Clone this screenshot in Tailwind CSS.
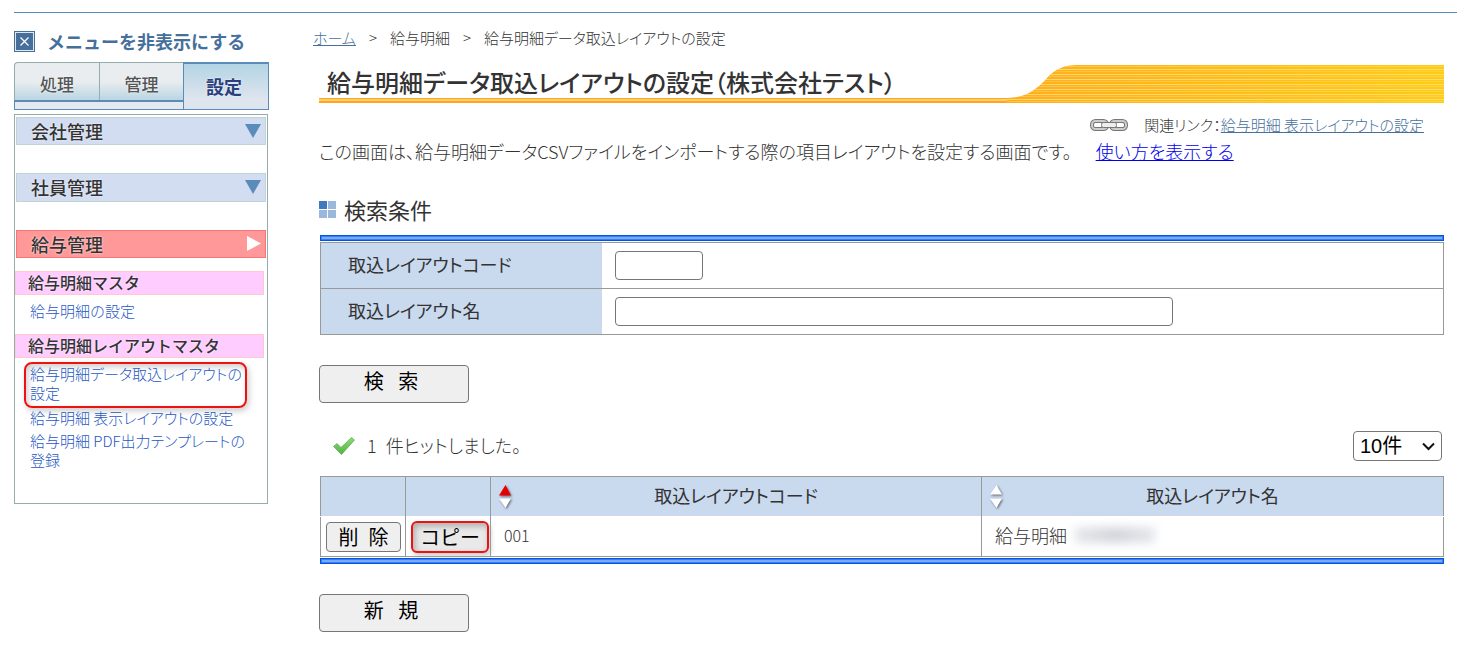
<!DOCTYPE html>
<html lang="ja">
<head>
    <meta charset="UTF-8">
    <title>給与明細データ取込レイアウトの設定</title>
    <script src="https://cdn.jsdelivr.net/npm/@tailwindcss/browser@4"></script>
</head>
<body class="bg-white text-[#333] font-light font-['Noto_Sans_CJK_JP',sans-serif] [font-feature-settings:'palt']">
    <div class="ml-[14px] mr-2 mt-3 border-t border-[#5b8bb9] flex">
        <!-- サイドメニュー -->
        <aside class="w-[255px] shrink-0 pt-[18px] [font-feature-settings:normal]">
            <button class="flex items-center gap-3 h-5 text-[18px] leading-5 font-bold text-[#466f9b]">
                <svg class="w-[21px] h-[21px]" viewBox="0 0 21 21" fill="none">
                    <rect x="0.500" y="0.500" width="20" height="20" fill="#dfe7ef" stroke="#466f9b"/>
                    <rect x="2" y="2" width="17" height="17" fill="#466f9b"/>
                    <path d="M6.500 6.500l8 8M14.500 6.500l-8 8" stroke="#fff" stroke-width="1.200"/>
                </svg>
                メニューを非表示にする
            </button>
            <nav class="mt-[11px] h-12 flex text-[17px] font-medium text-[#555] [text-shadow:0_0_2px_#fff]">
                <div class="w-[169px]">
                    <div class="flex h-10 border-b-2 border-[#5b8bb9]">
                        <a href="#" class="w-[85px] border-l border-t border-[#93aead] bg-linear-to-b from-[#e9edef] from-50% to-[#b9d5e3] flex items-center justify-center rounded-tl-sm pt-1">処理</a>
                        <a href="#" class="flex-1 border-l border-t border-[#93aead] bg-linear-to-b from-[#e9edef] from-50% to-[#b9d5e3] flex items-center justify-center pt-1">管理</a>
                    </div>
                    <div class="h-2 border-l border-b border-[#5b8bb9] bg-[#e6eaee]"></div>
                </div>
                <a href="#" class="flex-1 border border-t-2 border-[#5b8bb9] bg-linear-to-b from-[#b3d4e4] to-[#dfe5ee] to-80% flex items-center justify-center pb-px pr-1 text-lg text-[#2b3f7c] font-bold">設定</a>
            </nav>
            <div class="mt-1 mr-px h-[390px] border border-[#93aead] text-[18px] leading-6 font-medium [text-shadow:0_0_2px_#fff]">
                <a href="#" class="mx-px mt-[2px] h-7 border border-[#c2d3d3] bg-[#d2ddf2] pl-[14px] pr-1 pb-px flex items-center justify-between">会社管理
                    <svg class="w-4 h-[14px]" viewBox="0 0 16 14"><path d="M0 0h16L8 14z" fill="#5b8bb9"/></svg>
                </a>
                <a href="#" class="mx-px mt-7 h-[29px] border border-[#c2d3d3] bg-[#d2ddf2] pl-[14px] pr-1 pb-px flex items-center justify-between">社員管理
                    <svg class="w-4 h-[14px]" viewBox="0 0 16 14"><path d="M0 0h16L8 14z" fill="#5b8bb9"/></svg>
                </a>
                <a href="#" class="mx-px mt-7 h-7 border border-[#ff7373] bg-[#ff9999] pl-[14px] pr-1 pb-px flex items-center justify-between">給与管理
                    <svg class="w-[14px] h-[15px]" viewBox="0 0 14 15"><path d="M0 0l14 7.500L0 15z" fill="#fff"/></svg>
                </a>
                <h3 class="mt-[13px] mr-[3px] h-6 border border-[#ffc8cc] bg-[#ffccff] pl-3 text-base leading-5">給与明細マスタ</h3>
                <a href="#" class="block mt-[6px] ml-[15px] text-[15px] leading-5 font-light text-[#1f57c4]">給与明細の設定</a>
                <h3 class="mt-[13px] mr-[3px] h-6 border border-[#ffc8cc] bg-[#ffccff] pl-3 text-base leading-5">給与明細レイアウトマスタ</h3>
                <div class="text-[15px] leading-[19px] font-light text-[#1f57c4] [font-feature-settings:'palt']">
                    <a href="#" class="block ml-[9px] mt-1 w-[223px] h-[46px] rounded-lg border-2 border-[#ee1111] shadow-[2px_3px_6px_#0003,inset_2px_3px_6px_#0003] pl-1">給与明細データ取込レイアウトの<br>設定</a>
                    <a href="#" class="block ml-[15px]">給与明細 表示レイアウトの設定</a>
                    <a href="#" class="block ml-[15px] mt-1">給与明細 PDF出力テンプレートの<br>登録</a>
                </div>
            </div>
        </aside>

        <!-- メイン -->
        <main class="flex-1 min-w-0 ml-[50px] mr-[13px]">
            <div class="-ml-[6px] mt-[15px] flex gap-[11px] text-[15px] leading-5">
                <a href="#" class="underline text-[#466f9b]">ホーム</a><span class="w-3 text-center">&gt;</span><span>給与明細</span><span class="w-3 text-center">&gt;</span><span>給与明細データ取込レイアウトの設定</span>
            </div>
            <div class="relative mt-[17px] h-[38px] flex flex-col justify-between">
                <svg class="absolute right-0 top-0 w-[437px] h-[38px]" viewBox="0 0 437 38">
                    <defs>
                        <linearGradient id="band"><stop offset="0" stop-color="#ffae1c"/><stop offset="1" stop-color="#ffcc12"/></linearGradient>
                        <pattern id="lines" width="5" height="5" patternUnits="userSpaceOnUse"><path d="M0 1.500h5" stroke="#ffe08a" stroke-opacity=".4"/><path d="M0 4.500h5" stroke="#ffe08a" stroke-opacity=".8"/></pattern>
                    </defs>
                    <path d="M0 33C20 33 31 23 40 13C48 4 57 0 70 0H437V38H0z" fill="url(#band)"/>
                    <path d="M0 33C20 33 31 23 40 13C48 4 57 0 70 0H437V38H0z" fill="url(#lines)"/>
                </svg>
                <h1 class="relative pl-2 text-2xl leading-[34px] h-[33px] font-medium">給与明細データ取込レイアウトの設定（株式会社テスト）</h1>
                <div class="mr-[437px] h-[5px] border-t border-b-2 border-[#ffa61a] bg-[#ffcf7a]"></div>
            </div>
            <div class="mt-3 mr-5 flex justify-end items-center text-[15px] leading-5">
                <svg class="w-[38px] h-3 mr-4" viewBox="0 0 38 12" fill="none">
                    <g stroke="#777" stroke-width="4"><rect x="2" y="2" width="15" height="8" rx="3.500"/><rect x="21" y="2" width="15" height="8" rx="3.500"/></g>
                    <g stroke="#ccc" stroke-width="2"><rect x="2" y="2" width="15" height="8" rx="3.500"/><rect x="21" y="2" width="15" height="8" rx="3.500"/></g>
                    <rect x="11.500" y="3.500" width="15" height="5" rx="2" fill="#eee" stroke="#777"/>
                </svg>
                <span>関連リンク：</span><a href="#" class="underline text-[#466f9b]">給与明細 表示レイアウトの設定</a>
            </div>
            <p class="mt-1 text-[18px] leading-6 flex gap-6"><span>この画面は、給与明細データCSVファイルをインポートする際の項目レイアウトを設定する画面です。</span><a href="#" class="underline text-[#0000ee]">使い方を表示する</a></p>
            <h2 class="mt-8 flex items-center gap-2 text-[22px] leading-7 font-normal">
                <svg class="w-[17px] h-[17px]" viewBox="0 0 17 17"><path d="M0 0h8v8H0z" fill="#3f7ac0"/><path d="M9 0h8v8H9zM0 9h8v8H0zM9 9h8v8H9z" fill="#9bb8dc"/></svg>
                検索条件
            </h2>
            <div class="mt-3 h-[6px] ml-px border border-[#0055e0] bg-[#7aaaff] shadow-[inset_0_0_0_1px_#3a80f5]"></div>
            <table class="mt-px ml-px w-[calc(100%-1px)] border-collapse border border-[#999] text-[18px] leading-6">
                <tr class="h-[46px] border-b border-[#999]">
                    <th class="w-[281px] bg-[#c9d9ee] pl-[27px] pb-1 text-left font-normal"><label for="code">取込レイアウトコード</label></th>
                    <td class="pl-[13px]"><input id="code" class="block w-[88px] h-[29px] border border-[#767676] rounded px-1"></td>
                </tr>
                <tr class="h-[46px]">
                    <th class="bg-[#c9d9ee] pl-[27px] pb-1 text-left font-normal"><label for="name">取込レイアウト名</label></th>
                    <td class="pl-[13px]"><input id="name" class="block w-[558px] h-[29px] border border-[#767676] rounded px-1"></td>
                </tr>
            </table>
            <button class="block mt-[30px] w-[150px] h-[38px] border border-[#767676] rounded bg-[#efefef] text-black text-xl leading-6 font-normal pb-[6px] pr-[6px]">検&ensp; 索</button>
            <div class="mt-7 flex items-center text-[18px] leading-6">
                <svg class="ml-[14px] mr-3 w-[22px] h-[18px]" viewBox="0 0 22 18">
                    <defs><linearGradient id="check" x2="0" y2="1"><stop offset="0" stop-color="#8fd97c"/><stop offset="1" stop-color="#4db53c"/></linearGradient></defs>
                    <path d="M0.500 9.500L4 6.500L8 10.500L18.500 0.500L21.500 3L8.500 17.500z" fill="url(#check)" stroke="#55a848" stroke-width=".7"/>
                </svg>
                <span class="pb-[2px]">1&ensp;件ヒットしました。</span>
                <div class="relative ml-auto mr-[2px]">
                    <select aria-label="表示件数" class="block appearance-none w-[89px] h-[30px] border border-[#767676] rounded bg-white text-black text-xl leading-6 font-normal font-['Liberation_Sans','Noto_Sans_CJK_JP',sans-serif] pl-[6px]"><option>10件</option></select>
                    <svg class="absolute right-[7px] top-[11px] w-[13px] h-[9px] pointer-events-none" viewBox="0 0 13 9" fill="none"><path d="M1 1.500l5.500 5.500L12 1.500" stroke="#111" stroke-width="2"/></svg>
                </div>
            </div>
            <table class="mt-[15px] ml-px w-[calc(100%-1px)] table-fixed border-collapse border border-[#999] text-[18px] leading-6">
                <tr class="h-10 bg-[#c9d9ee] border-b border-b-white">
                    <th class="w-[85px] border-r border-r-[#999]"></th>
                    <th class="w-[85px] border-r border-r-[#999]"></th>
                    <th class="w-[491px] border-r border-r-[#999] font-normal">
                        <div class="flex items-center px-[7px]">
                            <svg class="w-[15px] h-[26px] -mr-[15px] drop-shadow-[1px_1px_1px_#0008]" viewBox="0 0 15 26"><path d="M7.500 1L13 11.500H1z" fill="#e60000"/><path d="M1 14.500h12L7.500 24z" fill="#fff"/></svg>
                            <span class="flex-1 pb-1">取込レイアウトコード</span>
                        </div>
                    </th>
                    <th class="font-normal">
                        <div class="flex items-center px-[7px]">
                            <svg class="w-[15px] h-[26px] -mr-[15px] drop-shadow-[1px_1px_1px_#0008]" viewBox="0 0 15 26"><path d="M7.500 1L13 10.500H1zM1 14.500h12L7.500 24z" fill="#fff"/></svg>
                            <span class="flex-1 pb-1">取込レイアウト名</span>
                        </div>
                    </th>
                </tr>
                <tr class="h-10">
                    <td class="border-r border-[#999] pl-[5px]"><button class="block w-[75px] h-[30px] border border-[#767676] rounded bg-[#efefef] text-black text-xl leading-6 font-normal">削&ensp;除</button></td>
                    <td class="border-r border-[#999] pl-[5px]"><button class="block w-[78px] h-8 border-2 border-[#ee1111] rounded-md bg-[#e9e9e9] text-black text-xl leading-6 font-normal [font-feature-settings:normal] shadow-[2px_3px_5px_#0003,inset_2px_3px_6px_#0004]">コピー</button></td>
                    <td class="border-r border-[#999] pl-[13px] pb-1 text-base">001</td>
                    <td class="pl-[13px] pb-1"><div class="flex items-center">給与明細<span class="ml-2 w-20 h-4 bg-linear-to-r from-gray-200 via-gray-300 to-gray-200 blur-[5px]"></span></div></td>
                </tr>
            </table>
            <div class="mt-px h-[6px] ml-px border border-[#0055e0] bg-[#7aaaff] shadow-[inset_0_0_0_1px_#3a80f5]"></div>
            <button class="block mt-[30px] w-[150px] h-[38px] border border-[#767676] rounded bg-[#efefef] text-black text-xl leading-6 font-normal pb-[6px] pr-[6px]">新&ensp; 規</button>
        </main>
    </div>
</body>
</html>
